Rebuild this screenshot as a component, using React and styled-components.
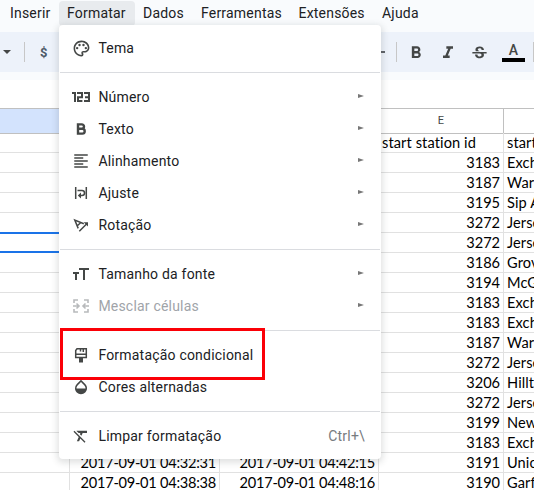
import React from 'react';
import styled, { createGlobalStyle } from 'styled-components';
import { MdOutlinePalette, MdFormatBold, MdFormatItalic, MdStrikethroughS, MdFormatAlignLeft, MdFormatClear, MdOpacity } from 'react-icons/md';

const Global = createGlobalStyle`
  * { box-sizing: border-box; }
  body { margin: 0; overflow: hidden; background: #fff; }
`;

const Page = styled.div`
  position: relative;
  width: 534px;
  height: 490px;
  overflow: hidden;
  display: flex;
  flex-direction: column;
  font-family: Roboto, sans-serif;
  color: #202124;
`;

const MenuBar = styled.nav`
  height: 32px;
  flex: none;
  display: flex;
  padding: 1px 0 0 3px;
  background: #f9fbfd;
`;

const MenuTitle = styled.div`
  width: ${(p) => p.$w}px;
  flex: none;
  height: 25px;
  padding-left: ${(p) => p.$pad || 7}px;
  border-radius: 4px;
  background: ${(p) => (p.$open ? '#e8ebee' : 'transparent')};
  font-size: 14px;
  line-height: 24px;
  letter-spacing: 0.2px;
  white-space: nowrap;
`;

const Toolbar = styled.div`
  height: 40px;
  flex: none;
  display: flex;
  align-items: center;
  background: #edf2fa;
  color: #444746;
`;

const Caret = styled.i`
  margin-left: 3px;
  border: 4px solid transparent;
  border-top-color: #444746;
  border-bottom: 0;
`;

const Divider = styled.i`
  width: 1px;
  height: 20px;
  flex: none;
  background: #c7c7c7;
  margin-left: ${(p) => p.$gap}px;
`;

const Dollar = styled.span`
  margin-left: 15px;
  width: 10px;
  font-size: 13px;
  font-weight: 700;
  color: #4d5a68;
`;

const Minus = styled.i`
  width: 10px;
  height: 2px;
  margin-left: 325px;
  background: #5f6368;
`;

const Tool = styled.span`
  display: flex;
  flex: none;
  margin-left: ${(p) => p.$gap}px;
  padding-top: 2px;
`;

const TextColor = styled.span`
  width: 23px;
  height: 20px;
  margin-left: 13px;
  padding-bottom: 1px;
  border-bottom: 4px solid #000;
  display: flex;
  justify-content: center;
  align-items: center;
  font-size: 14px;
  font-weight: 500;
`;

const Gap = styled.div`
  height: 8px;
  flex: none;
  background: #f9fbfd;
`;

const FormulaBar = styled.div`
  height: 29px;
  flex: none;
  border-bottom: 1px solid #c0c0c0;
`;

const columns = '70px 150px 159px 125px 150px';

const Headers = styled.div`
  display: grid;
  grid-template-columns: ${columns};
  height: 24px;
  flex: none;
`;

const Header = styled.div`
  border-right: 1px solid #c0c0c0;
  border-bottom: 1px solid #c0c0c0;
  background: ${(p) => (p.$on ? '#d3e3fd' : '#fff')};
  text-align: center;
  font-size: 11px;
  line-height: 24px;
  color: #444746;
`;

const Row = styled.div`
  display: grid;
  grid-template-columns: ${columns};
  height: 20px;
  flex: none;
`;

const Cell = styled.div`
  border-right: 1px solid #e1e1e1;
  border-bottom: 1px solid #e1e1e1;
  padding: 0 3px;
  overflow: hidden;
  white-space: nowrap;
  font: 14.6px/20px Lato, sans-serif;
  letter-spacing: ${(p) => (p.$date ? -0.26 : p.$right ? -0.05 : 0.1)}px;
  text-align: ${(p) => (p.$right ? 'right' : 'left')};
  color: #000;
`;

const Selection = styled.div`
  position: absolute;
  left: -10px;
  top: 232px;
  width: 100px;
  height: 21px;
  border: 2px solid #1a73e8;
`;

const Menu = styled.div`
  position: absolute;
  left: 59px;
  top: 25px;
  width: 322px;
  height: 434px;
  padding: 7px 1px;
  border-radius: 4px;
  background: #fff;
  box-shadow: 0 2px 6px 2px rgba(60, 64, 67, 0.15);
`;

const Item = styled.div`
  height: 32px;
  display: flex;
  align-items: center;
  padding-right: 15px;
  font-size: 14px;
  letter-spacing: 0.2px;
  color: ${(p) => (p.$off ? '#a0a4a9' : '#202124')};
`;

const IconBox = styled.span`
  width: 18px;
  height: 18px;
  display: flex;
  flex: none;
  justify-content: center;
  align-items: center;
  margin: 0 8.4px 0 12px;
  color: ${(p) => (p.$off ? '#b8babc' : '#444746')};

  svg { flex: none; }
`;

const Label = styled.span`
  flex: 1;
  white-space: nowrap;
`;

const Arrow = styled.i`
  margin: -2px 1px 0 0;
  border: 0 solid transparent;
  border-width: 2.5px 0 2.5px 6px;
  border-left-color: #777;
`;

const Shortcut = styled.span`
  color: #777b80;
  letter-spacing: 0.2px;
`;

const Rule = styled.hr`
  height: 1px;
  margin: 8px 0;
  border: 0;
  background: #dadce0;
`;

const Highlight = styled.div`
  position: absolute;
  left: 60px;
  top: 328px;
  width: 204.5px;
  height: 52px;
  border: 3px solid #fb0007;
`;

const Svg = (p) => <svg width="18" height="18" viewBox="0 0 18 18" fill="none" stroke="currentColor" {...p} />;

const NumberIcon = () => (
  <Svg strokeWidth="2" overflow="visible">
    <path d="M0 5H3V14M5 5H10V9.2H6V13H10.4M12 5H17V13H12M13 9.2H17" />
  </Svg>
);
const BoldIcon = () => (
  <Svg strokeWidth="2.4">
    <path d="M6 4.4H9.8A2.1 2.1 0 0 1 9.8 8.8H6M6 8.8H10.3A2.3 2.3 0 0 1 10.3 13.6H6M6 3.2V14.8" />
  </Svg>
);
const WrapIcon = () => (
  <Svg strokeWidth="1.5">
    <path d="M3.7 3V15M14.3 3V15M5.5 6.5H10A2.4 2.4 0 0 1 10 11.5H7" />
    <path d="M9 8.5L5.8 11.5L9 14.5Z" fill="currentColor" stroke="none" />
  </Svg>
);
const RotateIcon = () => (
  <Svg strokeWidth="1.5">
    <path d="M6.2 12.4L2.8 4.1L11.8 7.7M5.3 9.8L8.9 6.5M7.3 15.2L14.8 7.7" />
    <path d="M11.6 6.2H16V10.6Z" fill="currentColor" stroke="none" />
  </Svg>
);
const SizeIcon = () => (
  <Svg strokeWidth="2">
    <path d="M7 4H17M12 4V15M1 8H7M4 8V15" />
  </Svg>
);
const MergeIcon = () => (
  <Svg strokeWidth="1.6">
    <path d="M2 6V3H6M12 3H16V6M2 12V15H6M12 15H16V12M1 9H6M17 9H12M4.5 6.5L7 9L4.5 11.5M13.5 6.5L11 9L13.5 11.5" />
  </Svg>
);
const BrushIcon = () => (
  <Svg strokeWidth="1.5">
    <path d="M3.7 11.5V4.5L5 2.8H14.3V11.5ZM3.7 8.2H14.3M8.5 3V5.5M11.3 3V6" />
    <path d="M7 11.5H11V16.5H7Z" fill="currentColor" stroke="none" />
  </Svg>
);

const groups = [
  [{ label: 'Tema', icon: <MdOutlinePalette size={19} /> }],
  [
    { label: 'Número', icon: <NumberIcon />, sub: true },
    { label: 'Texto', icon: <BoldIcon />, sub: true },
    { label: 'Alinhamento', icon: <MdFormatAlignLeft size={18} />, sub: true },
    { label: 'Ajuste', icon: <WrapIcon />, sub: true },
    { label: 'Rotação', icon: <RotateIcon />, sub: true },
  ],
  [
    { label: 'Tamanho da fonte', icon: <SizeIcon />, sub: true },
    { label: 'Mesclar células', icon: <MergeIcon />, sub: true, off: true },
  ],
  [
    { label: 'Formatação condicional', icon: <BrushIcon /> },
    { label: 'Cores alternadas', icon: <MdOpacity size={18} /> },
  ],
  [{ label: 'Limpar formatação', icon: <MdFormatClear size={18} />, key: 'Ctrl+\\' }],
];

const rows = [
  ['', '', 'start station id', 'start station name'],
  ['', '', '3183', 'Exchange Place'],
  ['', '', '3187', 'Warren St'],
  ['', '', '3195', 'Sip Ave'],
  ['', '', '3272', 'Jersey & 3rd'],
  ['', '', '3272', 'Jersey & 3rd'],
  ['', '', '3186', 'Grove St PATH'],
  ['', '', '3194', 'McGinley Square'],
  ['', '', '3183', 'Exchange Place'],
  ['', '', '3183', 'Exchange Place'],
  ['', '', '3187', 'Warren St'],
  ['', '', '3272', 'Jersey & 3rd'],
  ['', '', '3206', 'Hilltop'],
  ['', '', '3272', 'Jersey & 3rd'],
  ['', '', '3199', 'Newport Pkwy'],
  ['', '', '3183', 'Exchange Place'],
  ['2017-09-01 04:32:31', '2017-09-01 04:42:15', '3191', 'Union St'],
  ['2017-09-01 04:38:38', '2017-09-01 04:48:16', '3190', 'Garfield Ave'],
];

export default function App() {
  return (
    <Page>
      <Global />
      <MenuBar>
        <MenuTitle $w={56}>Inserir</MenuTitle>
        <MenuTitle $w={76} $pad={8} $open>Formatar</MenuTitle>
        <MenuTitle $w={58} $pad={8}>Dados</MenuTitle>
        <MenuTitle $w={98} $pad={8}>Ferramentas</MenuTitle>
        <MenuTitle $w={83} $pad={7.5}>Extensões</MenuTitle>
        <MenuTitle $w={60} $pad={8}>Ajuda</MenuTitle>
      </MenuBar>
      <Toolbar>
        <Caret />
        <Divider $gap={13} />
        <Dollar>$</Dollar>
        <Minus />
        <Divider $gap={11} />
        <Tool $gap={9}><MdFormatBold size={20} /></Tool>
        <Tool $gap={12}><MdFormatItalic size={20} /></Tool>
        <Tool $gap={12}><MdStrikethroughS size={19} /></Tool>
        <TextColor>A</TextColor>
        <Divider $gap={8} />
      </Toolbar>
      <Gap />
      <FormulaBar />
      <Headers>
        <Header $on />
        <Header />
        <Header />
        <Header>E</Header>
        <Header />
      </Headers>
      {rows.map(([start, stop, id, name], i) => (
        <Row key={i}>
          <Cell />
          <Cell $right $date>{start}</Cell>
          <Cell $right $date>{stop}</Cell>
          <Cell $right={i > 0}>{id}</Cell>
          <Cell>{name}</Cell>
        </Row>
      ))}
      <Selection />
      <Menu>
        {groups.map((group, g) => (
          <React.Fragment key={g}>
            {g > 0 && <Rule />}
            {group.map((it) => (
              <Item key={it.label} $off={it.off}>
                <IconBox $off={it.off}>{it.icon}</IconBox>
                <Label>{it.label}</Label>
                {it.sub && <Arrow />}
                {it.key && <Shortcut>{it.key}</Shortcut>}
              </Item>
            ))}
          </React.Fragment>
        ))}
      </Menu>
      <Highlight />
    </Page>
  );
}
